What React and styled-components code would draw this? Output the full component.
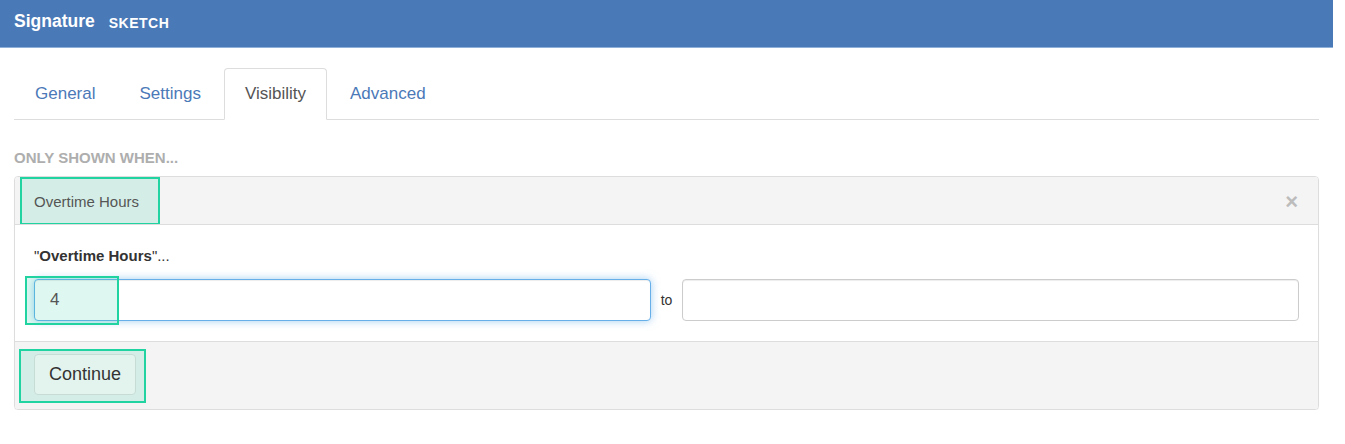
import React from 'react';
import styled, {createGlobalStyle} from 'styled-components';

const Global = createGlobalStyle`
  body {
    margin: 0;
    background: #fff;
    font-family: "Liberation Sans", Arial, sans-serif;
    color: #333;
  }
`;

const Page = styled.div`
  width: 1333px;
`;

const TopBar = styled.div`
  height: 48px;
  background: #4a79b7;
  border-bottom: 1px solid #8fb0d8;
  box-sizing: border-box;
  display: flex;
  align-items: center;
  padding: 0 14px 4px;
  gap: 14px;
  color: #fff;
`;

const Title = styled.span`
  font-size: 17.5px;
  font-weight: bold;
`;

const Tag = styled.span`
  font-size: 14px;
  font-weight: bold;
  letter-spacing: 0.5px;
  margin-top: 2px;
`;

const Content = styled.div`
  padding: 20px 14px 0;
`;

const Tabs = styled.ul`
  list-style: none;
  margin: 0;
  padding: 0;
  display: flex;
  border-bottom: 1px solid #ddd;
  height: 51px;
`;

const Tab = styled.li`
  margin-right: 2px;
  margin-bottom: -1px;
  padding: 0 20px;
  display: flex;
  align-items: center;
  font-size: 17px;
  color: ${p => (p.active ? '#555' : '#4b79b8')};
  background: ${p => (p.active ? '#fff' : 'transparent')};
  border: 1px solid ${p => (p.active ? '#ddd' : 'transparent')};
  border-bottom-color: ${p => (p.active ? '#fff' : 'transparent')};
  border-radius: 4px 4px 0 0;
`;

const Caption = styled.div`
  margin-top: 29px;
  font-size: 15px;
  line-height: 17px;
  font-weight: bold;
  color: #aeaeae;
`;

const Panel = styled.div`
  margin-top: 10px;
  border: 1px solid #ddd;
  border-radius: 4px;
  box-shadow: 0 1px 1px rgba(0, 0, 0, 0.05);
  overflow: hidden;
`;

const PanelHead = styled.div`
  height: 48px;
  box-sizing: border-box;
  background: #f4f4f4;
  border-bottom: 1px solid #ddd;
  display: flex;
  align-items: stretch;
  justify-content: space-between;
  padding: 0 20px 0 5px;
`;

const Marked = styled.div`
  position: relative;
  display: inline-flex;
  align-items: center;
  border: 2px solid #22d3a2;
  background: rgba(34, 211, 162, 0.15);
  box-sizing: border-box;
`;

const HeadLabel = styled(Marked)`
  padding: 0 19px 0 12px;
  font-size: 15px;
  color: #555;
  border-bottom-width: 1px;
`;

const Close = styled.span`
  align-self: center;
  font-size: 22px;
  font-weight: bold;
  color: #bcbcbc;
  line-height: 1;
  margin-top: 2px;
`;

const PanelBody = styled.div`
  padding: 22px 19px 20px;
`;

const Question = styled.div`
  font-size: 15px;
  line-height: 17px;
  color: #333;
  b {
    font-weight: bold;
  }
`;

const Row = styled.div`
  margin-top: 15px;
  display: flex;
  align-items: center;
  gap: 10px;
`;

const Field = styled.div`
  position: relative;
  flex: 1;
  height: 42px;
  box-sizing: border-box;
  border: 1px solid ${p => (p.focus ? '#66afe9' : '#ccc')};
  border-radius: 4px;
  background: #fff;
  box-shadow: ${p => (p.focus ? 'inset 0 1px 1px rgba(0,0,0,.075), 0 0 8px rgba(102,175,233,.6)' : 'inset 0 1px 1px rgba(0,0,0,.075)')};
  display: flex;
  align-items: center;
  padding-left: 15px;
  font-size: 17px;
  color: #555;
`;

const FieldMark = styled.div`
  position: absolute;
  left: -10px;
  top: -4px;
  width: 94px;
  height: 49px;
  border: 2px solid #22d3a2;
  background: rgba(34, 211, 162, 0.15);
  box-sizing: border-box;
`;

const Value = styled.span`
  position: relative;
`;

const To = styled.span`
  font-size: 14px;
  color: #333;
`;

const PanelFoot = styled.div`
  background: #f4f4f4;
  border-top: 1px solid #ddd;
  height: 68px;
  box-sizing: border-box;
  padding: 7px 0 0 4px;
`;

const ButtonMark = styled(Marked)`
  padding: 3px 8px 6px 13px;
`;

const Button = styled.button`
  height: 41px;
  width: 102px;
  padding: 0;
  font-family: inherit;
  font-size: 18px;
  color: #333;
  background: rgba(255, 255, 255, 0.35);
  border: 1px solid #c8dcd6;
  border-radius: 4px;
`;

export default function App() {
  const tabs = ['General', 'Settings', 'Visibility', 'Advanced'];
  return (
    <Page>
      <Global />
      <TopBar>
        <Title>Signature</Title>
        <Tag>SKETCH</Tag>
      </TopBar>
      <Content>
        <Tabs>
          {tabs.map(t => (
            <Tab key={t} active={t === 'Visibility'}>{t}</Tab>
          ))}
        </Tabs>
        <Caption>ONLY SHOWN WHEN...</Caption>
        <Panel>
          <PanelHead>
            <HeadLabel>Overtime Hours</HeadLabel>
            <Close>×</Close>
          </PanelHead>
          <PanelBody>
            <Question>"<b>Overtime Hours</b>"...</Question>
            <Row>
              <Field focus>
                <FieldMark />
                <Value>4</Value>
              </Field>
              <To>to</To>
              <Field />
            </Row>
          </PanelBody>
          <PanelFoot>
            <ButtonMark>
              <Button>Continue</Button>
            </ButtonMark>
          </PanelFoot>
        </Panel>
      </Content>
    </Page>
  );
}
